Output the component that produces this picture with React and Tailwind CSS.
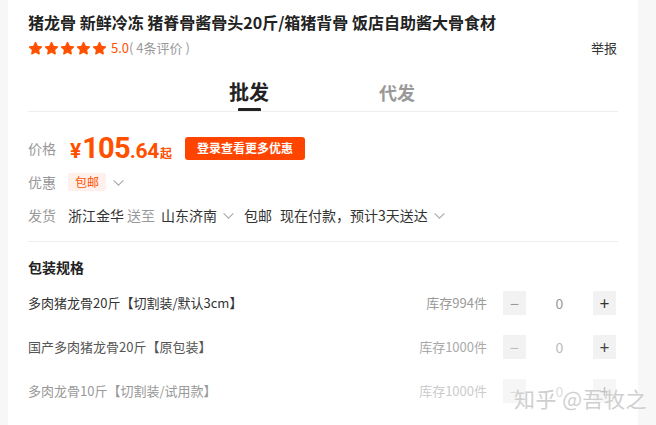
import React from "react";

const FONT = { fontFamily: '"Noto Sans CJK SC", "Noto Sans", sans-serif' };

// 规格列表
const SKUS = [
  { name: "多肉猪龙骨20斤【切割装/默认3cm】", stock: "库存994件", tone: "text-[#333]", stockTone: "text-[#999]", btn: "bg-[#f2f2f2]", sign: "text-[#999]", plus: "text-[#333]" },
  { name: "国产多肉猪龙骨20斤【原包装】", stock: "库存1000件", tone: "text-[#555]", stockTone: "text-[#aaa]", btn: "bg-[#f2f2f2]", sign: "text-[#bbb]", plus: "text-[#444]" },
  { name: "多肉龙骨10斤【切割装/试用款】", stock: "库存1000件", tone: "text-[#999]", stockTone: "text-[#ccc]", btn: "bg-[#f6f6f6]", sign: "text-[#ddd]", plus: "text-[#bbb]" },
];

export default function App() {
  return (
    <div className="w-[656px] h-[425px] bg-[#f7f7f7] flex overflow-hidden relative" style={FONT}>
      <div className="ml-[8px] w-[630px] bg-white px-[20px] pt-[11px]">
        <h1 className="text-[16px] leading-[22px] font-bold text-[#222] whitespace-nowrap">
          猪龙骨 新鲜冷冻 猪脊骨酱骨头20斤/箱猪背骨 饭店自助酱大骨食材
        </h1>

        <div className="mt-[5px] h-[20px] flex items-center">
          <div className="flex gap-[1px]">
            {[0, 1, 2, 3, 4].map((i) => (
              <Star key={i} />
            ))}
          </div>
          <span className="ml-[4px] text-[13px] text-[#ff5000]">5.0</span>
          <span className="text-[13px] text-[#999]">( 4条评价 )</span>
          <span className="ml-auto mr-[1px] text-[13px] text-[#333]">举报</span>
        </div>

        {/* 批发 / 代发 */}
        <div className="mt-[20px] flex items-start border-b border-[#eee]">
          <div className="ml-[201px] flex flex-col items-center">
            <span className="text-[20px] leading-[28px] font-bold text-[#222]">批发</span>
            <span className="mt-[2px] w-[23px] h-[3px] bg-[#222] rounded-t-[1px]" />
          </div>
          <span className="ml-[110px] text-[18px] leading-[28px] font-bold text-[#999]">代发</span>
        </div>

        {/* 价格 */}
        <div className="mt-[22px] h-[28px] flex items-center">
          <span className="w-[40px] text-[14px] text-[#999]">价格</span>
          <div className="ml-[2px] flex items-baseline text-[#ff5000] font-bold" style={{ fontFamily: "Roboto, sans-serif" }}>
            <span className="text-[21px] leading-none">¥</span>
            <span className="ml-[1px] text-[29px] leading-none tracking-[-0.8px]">105</span>
            <span className="text-[21px] leading-none tracking-[-0.3px]">.64</span>
            <span className="ml-[1px] text-[12px] leading-none" style={FONT}>起</span>
          </div>
          <button className="ml-[13px] w-[120px] h-[23px] rounded-[3px] bg-[#ff4400] text-white text-[12px] font-bold">
            登录查看更多优惠
          </button>
        </div>

        {/* 优惠 */}
        <div className="mt-[10px] h-[20px] flex items-center">
          <span className="w-[40px] text-[14px] text-[#999]">优惠</span>
          <span className="px-[7px] h-[18px] leading-[18px] bg-[#fff0ec] text-[12px] text-[#ff5000] rounded-[2px]">包邮</span>
          <Chevron className="ml-[6px]" />
        </div>

        {/* 发货 */}
        <div className="mt-[13px] h-[20px] flex items-center text-[14px] whitespace-nowrap">
          <span className="w-[40px] text-[#999]">发货</span>
          <span className="text-[#333]">浙江金华</span>
          <span className="ml-[3px] text-[#999]">送至</span>
          <span className="ml-[6px] text-[#333]">山东济南</span>
          <Chevron className="ml-[5px]" />
          <span className="ml-[9px] text-[#333]">包邮</span>
          <span className="ml-[8px] text-[#333]">现在付款，预计3天送达</span>
          <Chevron className="ml-[5px]" />
        </div>

        <div className="mt-[16px] border-t border-[#eee]" />

        <div className="mt-[15px] text-[14px] leading-[20px] font-bold text-[#222]">包装规格</div>

        <div className="mt-[14px] flex flex-col gap-[20px]">
          {SKUS.map((s) => (
            <div key={s.name} className="h-[24px] flex items-center">
              <span className={`text-[13px] ${s.tone}`}>{s.name}</span>
              <span className={`ml-auto text-[13px] ${s.stockTone}`}>{s.stock}</span>
              <span className={`ml-[16px] w-[23px] h-[24px] flex items-center justify-center text-[16px] ${s.btn} ${s.sign}`}>−</span>
              <span className={`w-[67px] text-center text-[14px] ${s.sign}`}>0</span>
              <span className={`w-[23px] h-[24px] flex items-center justify-center text-[17px] ${s.btn} ${s.plus}`}>+</span>
              <span className="w-[2px]" />
            </div>
          ))}
        </div>
      </div>

      {/* 水印 */}
      <div
        className="absolute left-[514px] top-[384px] text-[21px] leading-[28px] text-[#cfcfcf] whitespace-nowrap tracking-[0.5px]"
        style={{ textShadow: "0 0 2px #fff" }}
      >
        知乎 @吾牧之
      </div>
    </div>
  );
}

function Star() {
  return (
    <svg width="15" height="15" viewBox="0 0 24 24" aria-hidden="true">
      <path
        d="M12 2.5l2.9 6.1 6.6.8-4.9 4.6 1.3 6.6L12 17.3l-5.9 3.3 1.3-6.6-4.9-4.6 6.6-.8z"
        fill="#ff5000"
        stroke="#ff5000"
        strokeWidth="2.2"
        strokeLinejoin="round"
      />
    </svg>
  );
}

function Chevron({ className = "" }) {
  return (
    <svg className={className} width="13" height="13" viewBox="0 0 12 12" aria-hidden="true">
      <path d="M1.5 4l4.5 4.5L10.5 4" fill="none" stroke="#aaa" strokeWidth="1" />
    </svg>
  );
}
